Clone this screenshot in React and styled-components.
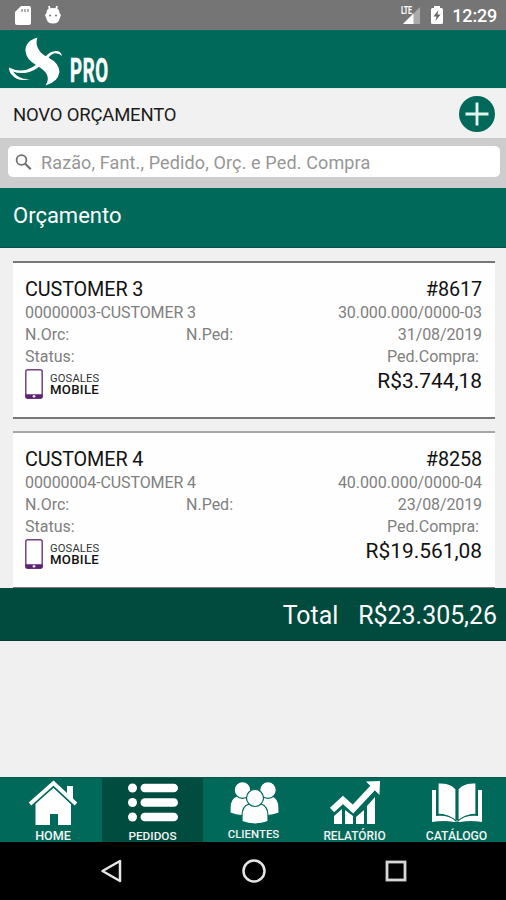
import React from "react";
import styled, { createGlobalStyle } from "styled-components";

const GlobalStyle = createGlobalStyle`
  * { box-sizing: border-box; }
  body { margin: 0; background: #f0f0f0; font-family: Roboto, "Liberation Sans", sans-serif; }
  svg { display: block; flex: none; }
`;

const Screen = styled.div`
  display: flex;
  flex-direction: column;
  width: 506px;
  height: 900px;
  overflow: hidden;
  background: #f0f0f0;
`;

const StatusBar = styled.div`
  display: flex;
  align-items: center;
  flex: none;
  height: 30px;
  padding: 0 9px 0 15px;
  background: #757575;
  color: #fff;
`;

const StatusGroup = styled.div`
  display: flex;
  align-items: center;
  gap: ${(p) => p.$gap}px;
  margin-left: ${(p) => (p.$end ? "auto" : 0)};
`;

const Clock = styled.span`
  font-size: 18px;
  font-weight: 500;
  line-height: 30px;
  letter-spacing: -0.2px;
  padding-top: 2px;
  margin-left: -2px;
`;

const Header = styled.header`
  display: flex;
  flex: none;
  height: 58px;
  padding: 6px 0 0 8px;
  background: #00695a;
`;

const Brand = styled.span`
  color: #fff;
  font-size: 34px;
  font-weight: 700;
  line-height: 40px;
  letter-spacing: 1.2px;
  margin: 14px 0 0 7px;
  transform: scaleX(0.55);
  transform-origin: left;
  -webkit-text-stroke: 0.6px #fff;
`;

const NewQuoteBar = styled.div`
  display: flex;
  align-items: center;
  justify-content: space-between;
  flex: none;
  height: 50px;
  padding: 0 11px 0 13px;
  background: #f1f1f1;
  border-top: 1px solid #e4ecea;
`;

const NewQuoteLabel = styled.span`
  font-size: 18.5px;
  color: #1c1c1c;
  letter-spacing: -0.2px;
  padding-top: 3px;
`;

const AddButton = styled.button`
  display: flex;
  align-items: center;
  justify-content: center;
  width: 36px;
  height: 36px;
  padding: 0;
  border: 0;
  border-radius: 50%;
  background: #00695a;
`;

const SearchBar = styled.div`
  flex: none;
  height: 50px;
  padding: 8px 6px 11px 8px;
  background: #cdcdcd;
`;

const SearchField = styled.div`
  display: flex;
  align-items: center;
  gap: 9px;
  height: 31px;
  padding: 2px 0 0 7px;
  border-radius: 5px;
  background: #fff;
  color: #969696;
  font-size: 18px;
  letter-spacing: 0.13px;
`;

const SectionTitle = styled.h1`
  flex: none;
  height: 60px;
  margin: 0;
  padding-left: 13px;
  background: #00695a;
  border-bottom: 1px solid #075348;
  color: #fff;
  font-size: 22px;
  font-weight: 400;
  line-height: 56px;
`;

const OrderList = styled.main`
  display: flex;
  flex-direction: column;
  flex: none;
  gap: 12px;
  height: 340px;
  padding: 13px 11px 0 13px;
  overflow: hidden;
`;

const Card = styled.article`
  display: grid;
  grid-template-columns: 161px 100px 1fr;
  grid-template-rows: 23px 22px 22px 22px 30px;
  flex: none;
  height: 158px;
  padding: 15px 13px 0 12px;
  border-top: 2px solid ${(p) => p.$edge};
  border-bottom: 2px solid #777;
  background: #fefefe;
`;

const Customer = styled.span`
  grid-column: span 2;
  font-size: 19.8px;
  line-height: 24px;
  color: #111;
  letter-spacing: -0.1px;
  white-space: nowrap;
`;

const OrderNumber = styled(Customer)`
  grid-column: span 1;
  text-align: right;
`;

const Detail = styled.span`
  grid-column: span ${(p) => p.$span || 1};
  padding-right: ${(p) => p.$inset || 0}px;
  font-size: 16px;
  line-height: 23px;
  color: #808080;
  text-align: ${(p) => (p.$right ? "right" : "left")};
  letter-spacing: ${(p) => p.$track || 0}px;
  white-space: nowrap;
`;

const Source = styled.div`
  grid-column: span 2;
  display: flex;
  gap: 7px;
  padding-top: 2px;
`;

const SourceName = styled.div`
  display: flex;
  flex-direction: column;
  padding-top: 4px;
`;

const SourceTop = styled.span`
  font-size: 11.2px;
  line-height: 11px;
  letter-spacing: 0.15px;
  color: #333;
`;

const SourceBottom = styled.span`
  font-size: 13.2px;
  font-weight: 500;
  line-height: 12px;
  color: #111;
  letter-spacing: 0.3px;
`;

const Price = styled.span`
  font-size: 20.9px;
  line-height: 29px;
  color: #111;
  text-align: right;
`;

const TotalBar = styled.div`
  display: flex;
  justify-content: flex-end;
  gap: 20px;
  flex: none;
  height: 53px;
  padding-right: 9px;
  background: #004b3d;
  border-bottom: 1px solid #043a30;
  color: #fff;
  font-size: 24.9px;
  line-height: 56px;
`;

const Spacer = styled.div`
  flex: 1;
`;

const TabBar = styled.nav`
  display: flex;
  flex: none;
  height: 65px;
  background: #00695a;
  border-top: 1px solid #08574b;
`;

const Tab = styled.a`
  display: flex;
  flex-direction: column;
  align-items: center;
  justify-content: space-between;
  width: ${(p) => p.$width}px;
  padding-left: ${(p) => p.$shift || 0}px;
  background: ${(p) => (p.$active ? "#004c3f" : "transparent")};
  color: #f4f4f4;
  font-size: ${(p) => p.$size || 11.8}px;
  font-weight: 500;
  line-height: 12px;
  padding-bottom: ${(p) => p.$lift || 0}px;
  white-space: nowrap;
`;

const SystemNav = styled.div`
  display: flex;
  align-items: center;
  flex: none;
  height: 58px;
  padding-left: 100px;
  gap: 119.5px;
  background: #000;
`;

const SdIcon = () => (
  <svg width="16" height="19" viewBox="0 0 16 19">
    <path d="M6 0h8q2 0 2 2v15q0 2-2 2H2q-2 0-2-2V6z" fill="#fff" />
    <path d="M7 3v3M10 3v3M13 3v3" stroke="#858585" strokeWidth="1.3" />
  </svg>
);

const DroidIcon = () => (
  <svg width="16" height="18" viewBox="0 0 16 18">
    <path d="M4 0l1 4M12 0l-1 4" stroke="#fff" strokeWidth="1.8" />
    <path d="M3 3q5-2 10 0 1.500 1 1.500 4L16 9l-1.500 4q-1 4.500-6.500 4.500T1.500 13L0 9l1.500-2q0-3 1.500-4z" fill="#fff" />
    <circle cx="5" cy="9.500" r="1" fill="#757575" />
    <circle cx="11" cy="9.500" r="1" fill="#757575" />
  </svg>
);

const LteLabel = styled.span`
  font-size: 10px;
  font-weight: 700;
  line-height: 9px;
  letter-spacing: -0.4px;
  transform: scaleX(0.72);
  transform-origin: left;
  margin: -1px -13px 0 -3px;
  align-self: flex-start;
`;

const SignalIcon = () => (
  <svg width="17" height="17" viewBox="0 0 17 17">
    <path d="M17 0v17H0z" fill="#aaa" />
    <path d="M10.500 6.500V17H0z" fill="#fff" />
  </svg>
);

const BatteryIcon = () => (
  <svg width="12" height="18" viewBox="0 0 12 18">
    <path d="M3 0h6v2h1.500Q12 2 12 3.500v13q0 1.500-1.500 1.500h-9Q0 18 0 16.500v-13Q0 2 1.500 2H3z" fill="#fff" />
    <path d="M7.500 4L2.500 10.500h3L4.500 15l5-6.500h-3z" fill="#666" />
  </svg>
);

const Logo = () => (
  <svg width="55" height="50" viewBox="0 0 55 50">
    <path
      d="M29.500 1.500Q27 8 31 14Q33 18 41 22Q51 27 51.500 36Q50 46 37.500 49.500Q42 43 38 37Q35 33 28 29Q18 23 17.500 15Q17 5 29.500 1.500Z"
      fill="#fff"
    />
    <path d="M1 31.500Q8 35.500 18 34Q26 31 32 26L34 28Q26 36 17 37Q9 37.500 5 35.500Q11 44 22 43Q10 46.500 4 39Q1 36 1 31.500Z" fill="#fff" />
    <path d="M37 21Q42 15 48 15Q53 15 54 20Q50 16.500 46 17.500Q42 18.500 40 23Z" fill="#fff" />
  </svg>
);

const PlusIcon = () => (
  <svg width="24" height="24" viewBox="0 0 24 24">
    <path d="M12 .5v23M.5 12h23" stroke="#e1f3ed" strokeWidth="2.900" />
  </svg>
);

const SearchIcon = () => (
  <svg width="17" height="17" viewBox="0 0 17 17" fill="none" stroke="#707070">
    <circle cx="6.500" cy="6" r="4.900" strokeWidth="1.800" />
    <path d="M10 9.500l5.700 5.700" strokeWidth="2.200" />
  </svg>
);

const PhoneIcon = () => (
  <svg width="18" height="30" viewBox="0 0 18 30">
    <rect x=".8" y=".8" width="16.400" height="28.400" rx="2" fill="#fff" stroke="#744386" strokeWidth="1.500" />
    <path d="M.5 25.200h17v2.300q0 2-2 2h-13q-2 0-2-2z" fill="#5c2372" />
    <circle cx="9" cy="27.300" r="1.400" fill="#e8ddeb" />
  </svg>
);

const HomeIcon = () => (
  <svg width="50" height="49" viewBox="0 0 50 49">
    <path d="M39 8h6v14l-6-6z" fill="#fff" />
    <path d="M7.500 25L25 9l18 17v21H30V36h-8v11H7.500z" fill="#fff" />
    <path d="M3 28.500L25.500 8.500 47 28.500" fill="none" stroke="#00695a" strokeWidth="2" />
    <path d="M2 26L25.500 5 48 26" fill="none" stroke="#fff" strokeWidth="3.800" />
  </svg>
);

const ListIcon = () => (
  <svg width="50" height="47" viewBox="0 0 50 47" fill="#fff">
    {[10, 24.500, 39].map((y) => (
      <g key={y}>
        <circle cx="4.500" cy={y} r="4.500" />
        <rect x="12.500" y={y - 4.300} width="37.500" height="8.600" rx="4.300" />
      </g>
    ))}
  </svg>
);

const PeopleIcon = () => (
  <svg width="52" height="48" viewBox="0 0 52 48" fill="#fff" stroke="#00695a" strokeWidth="1.200">
    <path d="M2 35V30q0-10 7-12h10q6 2 7 12v5q-12 5-24 0z" />
    <path d="M28 35v-5q1-10 7-12h9q7 2 7 12v5q-12 5-23 0z" />
    <circle cx="14.500" cy="12" r="8.300" />
    <circle cx="40" cy="12" r="8.300" />
    <path d="M14 43.500V38q0-10 7-12h12q7 2 7 12v5.500q-13 5-26 0z" />
    <circle cx="27" cy="20" r="8.500" />
  </svg>
);

const ChartIcon = () => (
  <svg width="52" height="47" viewBox="0 0 52 47">
    <path d="M5 38l8-7v15H5zM16 32l8 6v8h-8zM27 39l8-7v14h-8zM38 28l8-9v27h-8z" fill="#fff" />
    <path d="M3 32L14 22l10 9L45 8.500" fill="none" stroke="#fff" strokeWidth="6.300" />
    <path d="M37 3.500l14-.5-.5 14z" fill="#fff" />
  </svg>
);

const BookIcon = () => (
  <svg width="52" height="47" viewBox="0 0 52 47">
    <path d="M1 12h4v26q12-1 20 4h2q8-5 20-4V12h4v32q-12-2-22 0h-6q-10-2-22 0z" fill="#fff" />
    <path d="M7 5q12-1 18 6v32q-6-6-18-7z" fill="#fff" stroke="#00695a" strokeWidth="1.200" />
    <path d="M45 5q-12-1-18 6v32q6-6 18-7z" fill="#fff" stroke="#00695a" strokeWidth="1.200" />
  </svg>
);

const BackIcon = () => (
  <svg width="22" height="24" viewBox="0 0 22 24">
    <path d="M20 2v20L2.500 12z" fill="none" stroke="#e6e6e6" strokeWidth="2.500" strokeLinejoin="round" />
  </svg>
);

const CircleIcon = () => (
  <svg width="24" height="24" viewBox="0 0 24 24">
    <circle cx="12" cy="12" r="10.500" fill="none" stroke="#e6e6e6" strokeWidth="2.500" />
  </svg>
);

const SquareIcon = () => (
  <svg width="22" height="22" viewBox="0 0 22 22">
    <rect x="2" y="2" width="18" height="18" fill="none" stroke="#d6d6d6" strokeWidth="2.800" />
  </svg>
);

const orders = [
  { name: "CUSTOMER 3", number: "#8617", code: "00000003-CUSTOMER 3", taxId: "30.000.000/0000-03", date: "31/08/2019", price: "R$3.744,18", edge: "#777" },
  { name: "CUSTOMER 4", number: "#8258", code: "00000004-CUSTOMER 4", taxId: "40.000.000/0000-04", date: "23/08/2019", price: "R$19.561,08", edge: "#a4a7a5" },
];

const OrderCard = ({ order }) => (
  <Card $edge={order.edge}>
    <Customer>{order.name}</Customer>
    <OrderNumber>{order.number}</OrderNumber>
    <Detail $span={2} $track={-0.1}>{order.code}</Detail>
    <Detail $right $track={-0.07}>{order.taxId}</Detail>
    <Detail>N.Orc:</Detail>
    <Detail>N.Ped:</Detail>
    <Detail $right $track={-0.1}>{order.date}</Detail>
    <Detail $span={2}>Status:</Detail>
    <Detail $right $inset={3}>Ped.Compra:</Detail>
    <Source>
      <PhoneIcon />
      <SourceName>
        <SourceTop>GOSALES</SourceTop>
        <SourceBottom>MOBILE</SourceBottom>
      </SourceName>
    </Source>
    <Price>{order.price}</Price>
  </Card>
);

export default function App() {
  return (
    <Screen>
      <GlobalStyle />
      <StatusBar>
        <StatusGroup $gap={14}>
          <SdIcon />
          <DroidIcon />
        </StatusGroup>
        <StatusGroup $end $gap={11}>
          <StatusGroup $gap={0}>
            <LteLabel>LTE</LteLabel>
            <SignalIcon />
          </StatusGroup>
          <BatteryIcon />
          <Clock>12:29</Clock>
        </StatusGroup>
      </StatusBar>
      <Header>
        <Logo />
        <Brand>PRO</Brand>
      </Header>
      <NewQuoteBar>
        <NewQuoteLabel>NOVO ORÇAMENTO</NewQuoteLabel>
        <AddButton aria-label="Novo orçamento">
          <PlusIcon />
        </AddButton>
      </NewQuoteBar>
      <SearchBar>
        <SearchField>
          <SearchIcon />
          <span>Razão, Fant., Pedido, Orç. e Ped. Compra</span>
        </SearchField>
      </SearchBar>
      <SectionTitle>Orçamento</SectionTitle>
      <OrderList>
        {orders.map((order) => (
          <OrderCard key={order.number} order={order} />
        ))}
      </OrderList>
      <TotalBar>
        <span>Total</span>
        <span>R$23.305,26</span>
      </TotalBar>
      <Spacer />
      <TabBar>
        <Tab $width={102} $shift={4} $size={12.6}>
          <HomeIcon />
          HOME
        </Tab>
        <Tab $width={101} $active>
          <ListIcon />
          PEDIDOS
        </Tab>
        <Tab $width={101} $lift={2} $size={11.4}>
          <PeopleIcon />
          CLIENTES
        </Tab>
        <Tab $width={101} $size={11.9}>
          <ChartIcon />
          RELATÓRIO
        </Tab>
        <Tab $width={101} $shift={2} $size={12.2}>
          <BookIcon />
          CATÁLOGO
        </Tab>
      </TabBar>
      <SystemNav>
        <BackIcon />
        <CircleIcon />
        <SquareIcon />
      </SystemNav>
    </Screen>
  );
}
